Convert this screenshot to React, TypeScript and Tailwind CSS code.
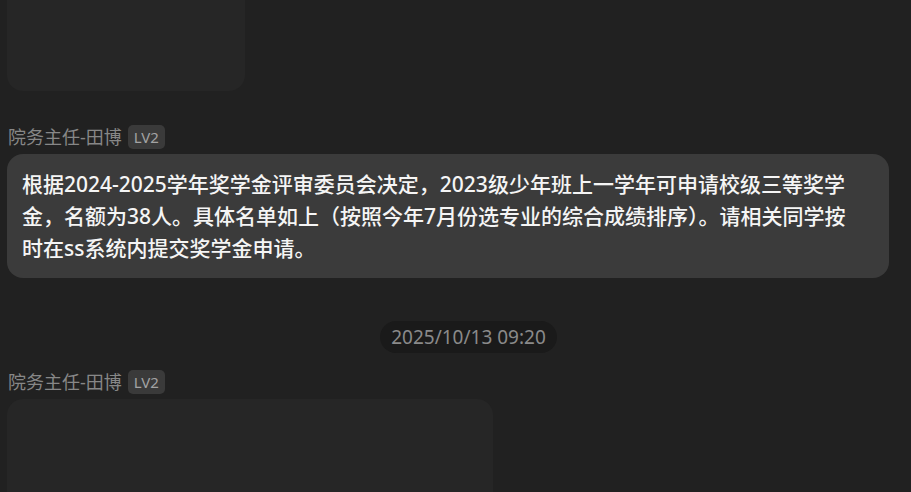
const fontStack = "font-['Noto_Sans','Noto_Sans_CJK_SC',sans-serif]";

function SenderLine({ name, level }: { name: string; level: string }) {
  return (
    <div className="flex items-center gap-[6px] pl-[1px]">
      <span className="text-[18px] leading-[24px] text-[#878787]">{name}</span>
      <span className="flex h-[24px] items-center rounded-[5px] bg-[#3a3a3a] px-[6px] text-[15px] text-[#a3a3a3]">
        {level}
      </span>
    </div>
  );
}

export default function App() {
  return (
    <div className={`${fontStack} h-[492px] w-[911px] overflow-hidden bg-[#212121]`}>
      <div className="flex flex-col pl-[7px] pr-[22px]">
        <div className="-mt-[60px] h-[151px] w-[238px] rounded-[16px] bg-[#262626]" />

        <div className="mt-[34px]">
          <SenderLine name="院务主任-田博" level="LV2" />
        </div>

        <div className="mt-[5px] rounded-[16px] bg-[#3b3b3b] px-[15px] py-[14px] text-[21px] leading-[32px] font-medium text-[#f5f5f5]">
          根据2024-2025学年奖学金评审委员会决定，2023级少年班上一学年可申请校级三等奖学
          <br />
          金，名额为38人。具体名单如上（按照今年7月份选专业的综合成绩排序）。请相关同学按
          <br />
          时在ss系统内提交奖学金申请。
        </div>

        <div className="mt-[43px] flex justify-center pl-[41px]">
          <span className="flex h-[32px] items-center rounded-full bg-[#1a1a1a] px-[11px] text-[19px] text-[#8a8a8a]">
            2025/10/13 09:20
          </span>
        </div>

        <div className="mt-[17px]">
          <SenderLine name="院务主任-田博" level="LV2" />
        </div>

        <div className="mt-[5px] h-[160px] w-[486px] rounded-[16px] bg-[#262626]" />
      </div>
    </div>
  );
}
